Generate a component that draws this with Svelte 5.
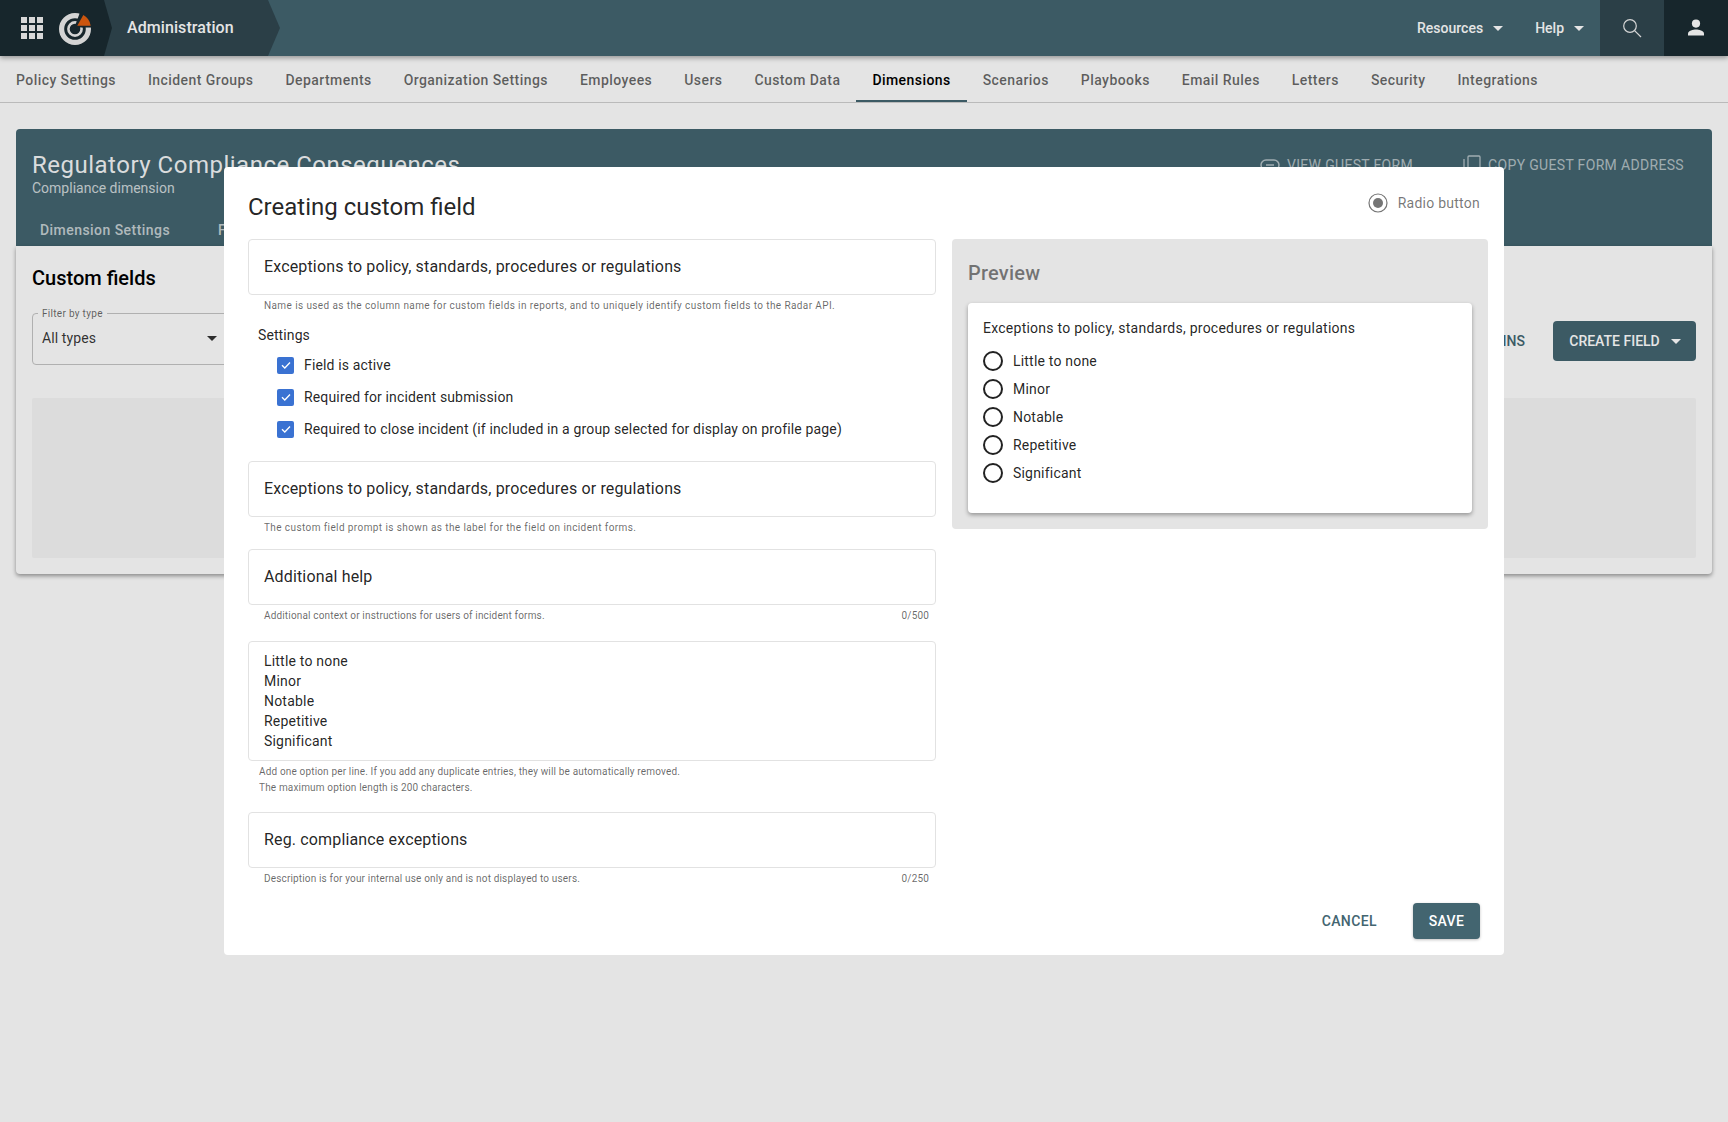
<script>
  const tabs = ['Policy Settings','Incident Groups','Departments','Organization Settings','Employees','Users','Custom Data','Dimensions','Scenarios','Playbooks','Email Rules','Letters','Security','Integrations'];
  const options = ['Little to none','Minor','Notable','Repetitive','Significant'];
  const checks = ['Field is active','Required for incident submission','Required to close incident (if included in a group selected for display on profile page)'];
  const question = 'Exceptions to policy, standards, procedures or regulations';
</script>

<div class="page">
  <header class="topbar">
    <div class="crumb crumb-admin">Administration</div>
    <div class="crumb crumb-home">
      <svg class="grid" viewBox="0 0 22 22" width="22" height="22" fill="#f1f1f1">
        {#each [0,8,16] as y}{#each [0,8,16] as x}<rect x={x} y={y} width="6" height="6"/>{/each}{/each}
      </svg>
      <svg class="logo" viewBox="0 0 32 32" width="32" height="32">
        <circle cx="16" cy="16" r="13.4" fill="none" stroke="#ececec" stroke-width="5.2"/>
        <circle cx="16" cy="16" r="6.6" fill="none" stroke="#ececec" stroke-width="2.6"/>
        <path d="M15 15.500 L21.500 -2 L35 -2 L35 14.600 L16 14.600Z" fill="#1a2b31"/>
        <path d="M18.300 12.700 L24.300 2 A 14.500 14.500 0 0 1 31.700 12.700Z" fill="#e35f10"/>
      </svg>
    </div>
    <div class="top-right">
      <span class="menu">Resources <i class="caret"></i></span>
      <span class="menu">Help <i class="caret"></i></span>
      <span class="cell cell-search">
        <svg viewBox="0 0 20 20" width="20" height="20" fill="none" stroke="#eee" stroke-width="1.2"><circle cx="8" cy="8" r="6.3"/><path d="M12.6 12.6 L19 19"/></svg>
      </span>
      <span class="cell cell-user">
        <svg viewBox="0 0 18 18" width="18" height="18" fill="#fff"><circle cx="9" cy="4.6" r="4.1"/><path d="M1 16.500 v-2 c0-2.600 5.300-4 8-4 s8 1.400 8 4 v2Z"/></svg>
      </span>
    </div>
  </header>

  <nav class="tabs">
    {#each tabs as t}
      <span class="tab" class:active={t === 'Dimensions'}>{t}</span>
    {/each}
  </nav>

  <main class="content">
    <section class="hero">
      <div class="hero-top">
        <div>
          <h1>Regulatory Compliance Consequences</h1>
          <p>Compliance dimension</p>
        </div>
        <div class="hero-actions">
          <span class="hero-link">
            <svg viewBox="0 0 20 12" width="20" height="12" fill="none" stroke="currentColor" stroke-width="1.5"><rect x="1" y="1" width="18" height="10" rx="5"/><path d="M6 6h8"/></svg>
            VIEW GUEST FORM
          </span>
          <span class="hero-link">
            <svg viewBox="0 0 18 20" width="18" height="20" fill="none" stroke="currentColor" stroke-width="1.3"><path d="M1 4v15"/><rect x="5" y="1" width="12" height="16" rx="1"/></svg>
            COPY GUEST FORM ADDRESS
          </span>
        </div>
      </div>
      <div class="hero-tabs"><span>Dimension Settings</span><span>Fields</span></div>
    </section>
    <section class="card">
      <h2>Custom fields</h2>
      <div class="tools">
        <div class="filter">
          <span class="filter-label">Filter by type</span>
          <span>All types</span>
          <i class="caret dark"></i>
        </div>
        <div class="tool-btns">
          <span class="plain">PLUGINS</span>
          <span class="create">CREATE FIELD <i class="caret"></i></span>
        </div>
      </div>
      <div class="empty"></div>
    </section>
  </main>

  <div class="overlay">
    <div class="modal">
      <div class="modal-head">
        <h3>Creating custom field</h3>
        <span class="type-tag">
          <svg viewBox="0 0 20 20" width="20" height="20"><circle cx="10" cy="10" r="9" fill="none" stroke="#757575" stroke-width="1.2"/><circle cx="10" cy="10" r="5" fill="#757575"/></svg>
          Radio button
        </span>
      </div>
      <div class="modal-body">
        <div class="form">
          <div class="field">{question}</div>
          <div class="help h1">Name is used as the column name for custom fields in reports, and to uniquely identify custom fields to the Radar API.</div>
          <div class="settings-label">Settings</div>
          <ul class="checks">
            {#each checks as c}
              <li>
                <span class="box"><svg viewBox="0 0 12 12" width="12" height="12" fill="none" stroke="#fff" stroke-width="1.3"><path d="M2 6.200 L4.800 9 L10 3.500"/></svg></span>
                {c}
              </li>
            {/each}
          </ul>
          <div class="field">{question}</div>
          <div class="help h2">The custom field prompt is shown as the label for the field on incident forms.</div>
          <div class="field">Additional help</div>
          <div class="help h3 tight"><span>Additional context or instructions for users of incident forms.</span><span>0/500</span></div>
          <div class="area">
            {#each options as o}<div>{o}</div>{/each}
          </div>
          <div class="help area-help tight">Add one option per line. If you add any duplicate entries, they will be automatically removed.<br/>The maximum option length is 200 characters.</div>
          <div class="field">Reg. compliance exceptions</div>
          <div class="help tight"><span>Description is for your internal use only and is not displayed to users.</span><span>0/250</span></div>
        </div>
        <aside class="preview">
          <h4>Preview</h4>
          <div class="preview-card">
            <div class="q">{question}</div>
            {#each options as o}
              <div class="radio"><i></i>{o}</div>
            {/each}
          </div>
        </aside>
      </div>
      <div class="modal-foot">
        <span class="cancel">CANCEL</span>
        <span class="save">SAVE</span>
      </div>
    </div>
  </div>
</div>

<style>
  :global(body) { margin: 0; background: #fff; font-family: Roboto, "Liberation Sans", sans-serif; }
  .page { position: relative; height: 1122px; overflow: hidden; background: #fefefe; color: #000; }
  h1, h2, h3, h4, p, ul { margin: 0; padding: 0; font-weight: 400; }

  .topbar { position: relative; z-index: 2; height: 56px; display: flex; background: #436570; box-shadow: 0 2px 5px rgba(0,0,0,.35); }
  .crumb { position: absolute; top: 0; height: 56px; display: flex; align-items: center; }
  .crumb-home { left: 0; width: 112px; background: #1a2b31; clip-path: polygon(0 0, 104px 0, 112px 28px, 104px 100%, 0 100%); }
  .grid { margin-left: 21px; }
  .logo { margin-left: 16px; margin-top: 2px; }
  .crumb-admin { left: 0; width: 280px; background: #304750; clip-path: polygon(0 0, 268px 0, 280px 28px, 268px 100%, 0 100%); padding: 0 0 1px 127px; box-sizing: border-box; color: #fff; font-size: 16px; font-weight: 500; letter-spacing: .08px; }
  .top-right { margin-left: auto; display: flex; align-items: center; color: #fff; font-size: 14px; font-weight: 500; }
  .menu { display: flex; align-items: center; gap: 10px; margin-right: 32px; }
  .menu:nth-child(2) { margin-right: 16px; }
  .caret { display: inline-block; width: 0; height: 0; border: 5px solid transparent; border-top-color: currentColor; border-bottom: 0; }
  .caret.dark { color: #333; }
  .cell { width: 64px; height: 56px; display: flex; align-items: center; justify-content: center; }
  .cell-search { background: #304750; }
  .cell-user { background: #1a2b31; }

  .tabs { height: 46px; display: flex; border-bottom: 1px solid #d0d0d0; }
  .tab { padding: 2px 16px 0; display: flex; align-items: center; font-size: 14px; font-weight: 500; letter-spacing: .435px; color: rgba(0,0,0,.6); height: 46px; box-sizing: border-box; }
  .tab.active { color: #000; box-shadow: inset 0 -2px 0 #436570; }

  .content { padding: 26px 16px 0; }
  .hero { height: 117px; background: #436570; border-radius: 4px 4px 0 0; color: #fff; display: flex; flex-direction: column; }
  .hero-top { display: flex; justify-content: space-between; padding: 22px 28px 0 16px; height: 85px; box-sizing: border-box; }
  .hero h1 { font-size: 24px; line-height: 28px; letter-spacing: .5px; color: rgba(255,255,255,.95); }
  .hero p { font-size: 14px; line-height: 18px; color: rgba(255,255,255,.75); letter-spacing: 0; }
  .hero-actions { display: flex; gap: 50px; }
  .hero-link { display: flex; align-items: center; gap: 7px; height: 28px; font-size: 14px; letter-spacing: .33px; color: rgba(255,255,255,.6); }
  .hero-tabs { display: flex; gap: 48px; padding: 0 24px; font-size: 14px; font-weight: 500; letter-spacing: .45px; color: rgba(255,255,255,.7); height: 32px; align-items: center; }
  .card { height: 328px; box-sizing: border-box; background: #fefefe; border-radius: 0 0 4px 4px; box-shadow: 0 2px 4px rgba(0,0,0,.4); padding: 20px 16px 16px; }
  .card h2 { font-size: 20px; font-weight: 500; line-height: 24px; }
  .tools { display: flex; justify-content: space-between; align-items: flex-start; margin-top: 23px; }
  .filter { position: relative; width: 200px; height: 52px; box-sizing: border-box; border: 1px solid #c4c4c4; border-radius: 4px; display: flex; align-items: center; justify-content: space-between; padding: 0 14px 2px 9px; font-size: 14px; letter-spacing: .1px; color: rgba(0,0,0,.8); }
  .filter-label { position: absolute; top: -6px; left: 5px; padding: 0 4px; background: #fefefe; font-size: 10px; line-height: 12px; color: rgba(0,0,0,.6); letter-spacing: .3px; }
  .tool-btns { display: flex; align-items: center; gap: 28px; margin-top: 8px; font-size: 14px; font-weight: 500; color: #436570; }
  .create { width: 143px; height: 40px; box-sizing: border-box; display: flex; align-items: center; justify-content: center; gap: 11px; padding-left: 1px; background: #436570; color: #fff; border-radius: 4px; }
  .empty { height: 160px; background: #f5f5f5; margin-top: 33px; border-radius: 2px; }

  .overlay { position: absolute; inset: 0; z-index: 5; background: rgba(0,0,0,.1); display: flex; justify-content: center; align-items: flex-start; padding-top: 167px; box-sizing: border-box; }
  .modal { width: 1280px; height: 788px; background: #fff; border-radius: 4px; display: flex; flex-direction: column; box-sizing: border-box; }
  .modal-head { height: 72px; display: flex; align-items: center; justify-content: space-between; padding: 0 24px; flex: none; box-sizing: border-box; }
  .modal-head h3 { font-size: 24px; line-height: 40px; color: rgba(0,0,0,.87); padding-top: 8px; }
  .type-tag { display: flex; align-items: center; gap: 10px; font-size: 14px; letter-spacing: .25px; color: rgba(0,0,0,.55); }
  .modal-body { display: grid; grid-template-columns: 688px 536px; gap: 16px; padding: 0 16px 0 24px; }
  .field { height: 56px; box-sizing: border-box; border: 1px solid #e2e2e2; border-radius: 4px; padding: 0 15px 2px; display: flex; align-items: center; font-size: 16px; letter-spacing: .15px; color: rgba(0,0,0,.87); }
  .help { display: flex; justify-content: space-between; padding: 5px 7px 0 16px; height: 21px; box-sizing: border-box; font-size: 10px; line-height: 12px; letter-spacing: .4px; color: rgba(0,0,0,.6); margin-bottom: 11px; }
  .tight { letter-spacing: .16px; }
  .h1 { margin-bottom: 9px; }
  .h3 { margin-bottom: 15px; }
  .settings-label { margin-left: 10px; font-size: 14px; line-height: 20px; color: rgba(0,0,0,.87); letter-spacing: .1px; }
  .checks { list-style: none; padding: 4px 0 16px 29px; }
  .checks li { height: 32px; display: flex; align-items: center; gap: 10px; font-size: 14px; letter-spacing: .15px; color: rgba(0,0,0,.87); }
  .box { width: 17px; height: 17px; background: #3a72d2; border-radius: 2px; display: flex; align-items: center; justify-content: center; flex: none; }
  .area { height: 120px; box-sizing: border-box; border: 1px solid #e2e2e2; border-radius: 4px; padding: 9px 15px; font-size: 14px; line-height: 20px; letter-spacing: .2px; color: rgba(0,0,0,.87); }
  .help.area-help { display: block; height: 34px; padding: 3px 0 0 11px; line-height: 16px; margin-bottom: 17px; }

  .preview { height: 290px; background: #e4e4e4; border-radius: 4px; padding: 22px 16px 16px; box-sizing: border-box; }
  .preview h4 { font-size: 20px; font-weight: 500; line-height: 24px; color: rgba(0,0,0,.5); letter-spacing: .2px; margin-bottom: 18px; }
  .preview-card { height: 210px; box-sizing: border-box; background: #fff; border-radius: 4px; box-shadow: 0 2px 4px rgba(0,0,0,.35); padding: 15px; }
  .q { font-size: 14px; line-height: 20px; letter-spacing: .25px; color: rgba(0,0,0,.87); margin-bottom: 9px; }
  .radio { height: 28px; display: flex; align-items: center; gap: 10px; font-size: 14px; letter-spacing: .2px; color: rgba(0,0,0,.87); }
  .radio i { width: 20px; height: 20px; box-sizing: border-box; border: 2px solid #222; border-radius: 50%; flex: none; }

  .modal-foot { margin-top: auto; display: flex; justify-content: flex-end; align-items: center; gap: 36px; padding: 0 24px 16px; font-size: 14px; font-weight: 500; letter-spacing: .4px; }
  .cancel { color: #436570; }
  .save { width: 67px; height: 36px; display: flex; align-items: center; justify-content: center; background: #436570; color: #fff; border-radius: 4px; box-shadow: 0 1px 3px rgba(0,0,0,.25); }
</style>
